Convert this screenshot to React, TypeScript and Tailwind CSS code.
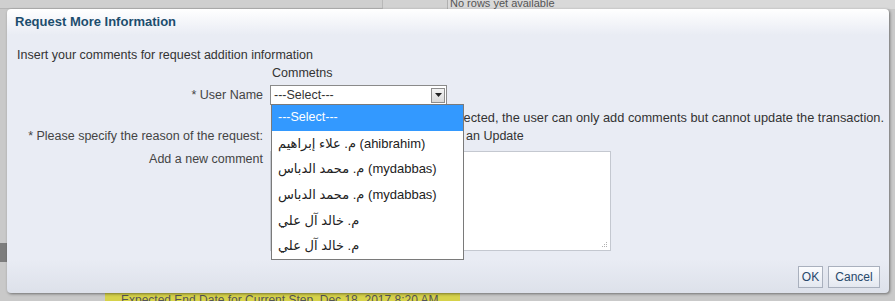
const OPTIONS = [
  "---Select---",
  "م. علاء إبراهيم (ahibrahim)",
  "م. محمد الدباس (mydabbas)",
  "م. محمد الدباس (mydabbas)",
  "م. خالد آل علي",
  "م. خالد آل علي",
];

function SelectArrow() {
  return (
    <span className="flex h-[15px] w-[14px] items-center justify-center border border-[#8d8d8d] bg-gradient-to-b from-[#f4f4f4] to-[#d9d9d9]">
      <svg width="7" height="4" viewBox="0 0 7 4">
        <path d="M0 0h7L3.5 4z" fill="#222" />
      </svg>
    </span>
  );
}

export default function App() {
  return (
    <div
      className="relative h-[301px] w-[895px] overflow-hidden bg-[#c9c9c9] text-[12.5px] text-[#333]"
      style={{ fontFamily: '"Liberation Sans", "Noto Sans", Arial, sans-serif' }}
    >
      {/* page behind the dialog */}
      <div className="flex h-[9px]">
        <div className="w-[382px] border-b border-[#b5b5b5] bg-[#cfcfcf]" />
        <div className="w-[65px] border-l border-[#b8b8b8] bg-[#d2d2d2]" />
        <div className="flex-1 overflow-hidden border-l border-[#b0b0b0] bg-[#d9d9d9] pl-[2px] text-[11px] leading-[6px] text-[#555]">
          No rows yet available
        </div>
      </div>
      <div className="absolute left-0 top-[243px] h-[19px] w-[7px] bg-[#7d7d7d]" />
      <div className="absolute left-[105px] top-[293px] h-[8px] w-[355px] overflow-hidden bg-[#d6d24a] pl-[16px] text-[12px] leading-[14px] text-[#555]">
        Expected End Date for Current Step&nbsp;&nbsp;Dec 18, 2017 8:20 AM
      </div>

      {/* dialog */}
      <div className="absolute left-[7px] top-[9px] flex h-[284px] w-[882px] flex-col rounded-[4px] bg-[#e9ecf4] bg-[linear-gradient(to_bottom,#ffffff_0px,#e9ecf4_26px,#e9ecf4_250px,#dde1ea_284px)] shadow-[1px_1px_3px_rgba(0,0,0,0.45)]">
        <div className="flex h-[26px] items-center pl-[8px] text-[13px] font-bold text-[#1c4d6e]">
          Request More Information
        </div>
        <div className="mt-[12px] h-[16px] pl-[10px] leading-[16px]">
          Insert your comments for request addition information
        </div>
        <div className="mt-[2px] h-[16px] pl-[265px] leading-[16px]">Commetns</div>

        <div className="mt-[4px] grid grid-cols-[256px_1fr] gap-x-[7px]">
          <div className="flex h-[20px] items-center justify-end text-[#444]">* User Name</div>
          <div className="flex h-[20px] w-[177px] items-center justify-between border border-[#8a8a8a] bg-white pl-[3px] pr-[1px]">
            <span>---Select---</span>
            <SelectArrow />
          </div>

          <div className="col-start-2 mt-[5px] h-[16px] whitespace-nowrap pl-[30px] text-[12.8px] leading-[16px]">
            If Comment Only is being selected, the user can only add comments but cannot update the transaction.
          </div>

          <div className="mt-[2px] h-[16px] whitespace-nowrap text-right leading-[16px] text-[#444]">
            * Please specify the reason of the request:
          </div>
          <div className="mt-[2px] h-[16px] leading-[16px]">
            <span className="pl-[146px]">Request an Update</span>
          </div>

          <div className="mt-[7px] h-[16px] text-right leading-[16px] text-[#444]">Add a new comment</div>
          <div className="relative mt-[7px] h-[100px] w-[341px] border border-[#c4c8d0] bg-white">
            <svg className="absolute bottom-[2px] right-[2px]" width="6" height="6" viewBox="0 0 6 6">
              <g fill="#b0b0b0">
                <rect x="4" y="0" width="1" height="1" />
                <rect x="2" y="2" width="1" height="1" />
                <rect x="4" y="2" width="1" height="1" />
                <rect x="0" y="4" width="1" height="1" />
                <rect x="2" y="4" width="1" height="1" />
                <rect x="4" y="4" width="1" height="1" />
              </g>
            </svg>
          </div>
        </div>

        <div className="mt-[15px] flex justify-end gap-[5px] pr-[9px]">
          <button className="h-[22px] w-[25px] border border-[#a9b0bd] bg-gradient-to-b from-[#fbfcfe] to-[#e4e8f0] text-[12px] text-[#27486b]">
            OK
          </button>
          <button className="h-[22px] w-[52px] border border-[#a9b0bd] bg-gradient-to-b from-[#fbfcfe] to-[#e4e8f0] text-[12px] text-[#27486b]">
            Cancel
          </button>
        </div>

        {/* open dropdown list */}
        <div className="absolute left-[264px] top-[95px] flex h-[156px] w-[193px] flex-col border border-[#7a7a7a] bg-white">
          {OPTIONS.map((o, i) => (
            <div
              key={i}
              dir="ltr"
              className={`flex flex-1 items-center pl-[6px] ${
                i === 0 ? "bg-[#3399ff] text-[12.5px] text-white" : "text-[13px] text-[#222]"
              }`}
              style={i === 0 ? undefined : { fontFamily: '"Liberation Sans", "DejaVu Sans", sans-serif' }}
            >
              {o}
            </div>
          ))}
        </div>
      </div>
    </div>
  );
}
